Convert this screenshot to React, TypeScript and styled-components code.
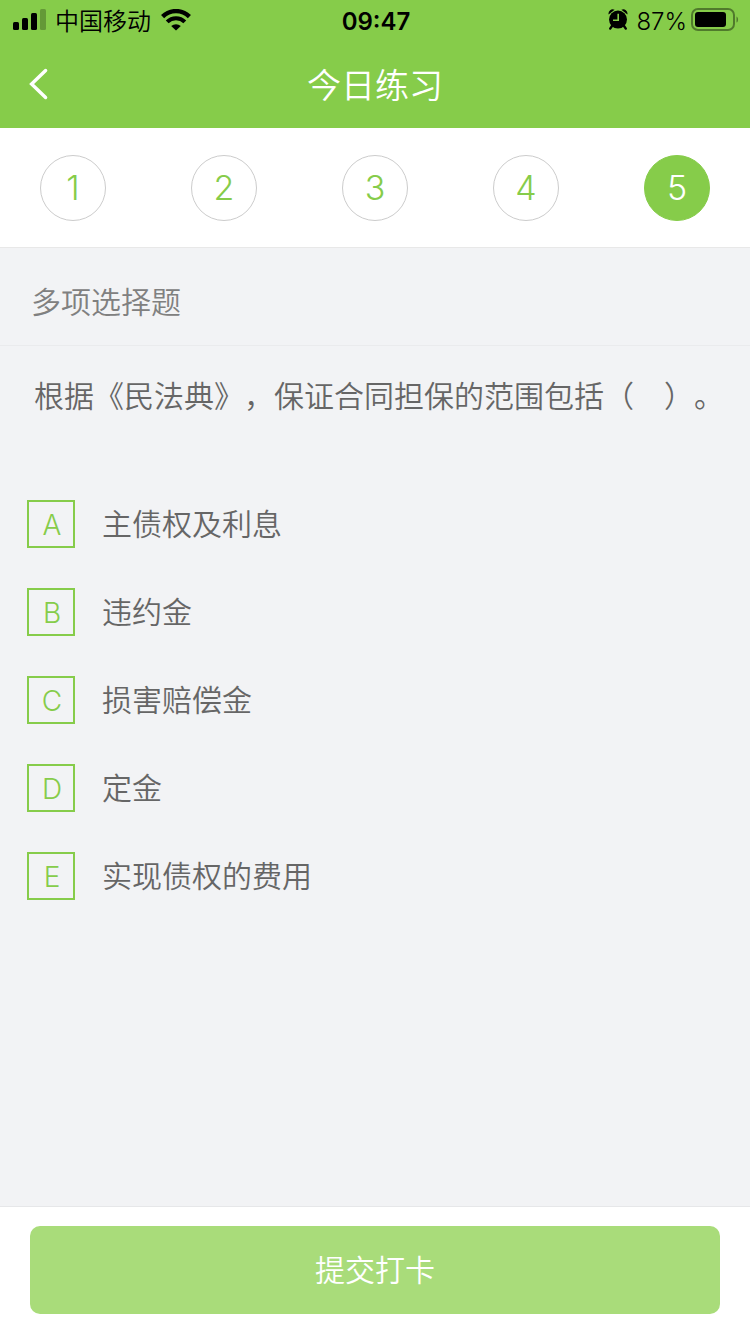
import React, { useState } from 'react';
import styled, { createGlobalStyle } from 'styled-components';

const GlobalStyle = createGlobalStyle`
  * { box-sizing: border-box; }
  body {
    margin: 0;
    background: #f2f3f5;
    color: #666;
    font-family: Inter, "Noto Sans CJK SC", sans-serif;
    font-size: 30px;
    font-weight: 350;
    line-height: 44px;
    text-spacing-trim: space-all;
  }
  button { font: inherit; padding: 0; border: 0; cursor: pointer; }
`;

const Page = styled.div`
  display: flex;
  flex-direction: column;
  min-height: 100vh;
`;

const Top = styled.header`
  background: #86cc4a;
`;

const StatusBar = styled.div`
  display: grid;
  grid-template-columns: 1fr auto 1fr;
  align-items: center;
  height: 40px;
  padding: 0 11px 0 13px;
  color: #000;
  font-size: 24px;
  line-height: 32px;
`;

const StatusGroup = styled.div<{ $end?: boolean; $gap: number }>`
  display: flex;
  align-items: center;
  justify-content: ${p => (p.$end ? 'flex-end' : 'flex-start')};
  gap: ${p => p.$gap}px;
`;

const StatusText = styled.span`
  padding-top: 3px;
`;

const Clock = styled.time`
  padding-top: 3px;
  font-weight: 600;
`;

const NavBar = styled.nav`
  display: grid;
  grid-template-columns: 78px 1fr 78px;
  align-items: center;
  height: 88px;
`;

const BackButton = styled.button`
  display: flex;
  align-items: center;
  height: 88px;
  padding-left: 28px;
  background: none;
`;

const Title = styled.h1`
  margin: 0;
  padding-top: 4px;
  color: #fff;
  font-size: 34px;
  font-weight: 350;
  text-align: center;
`;

const Steps = styled.div`
  display: flex;
  justify-content: space-between;
  padding: 27px 40px 26px;
  background: #fff;
  border-bottom: 1px solid #e8e8e8;
`;

const Step = styled.button<{ $active: boolean }>`
  width: 66px;
  height: 66px;
  && {
    border: 1px solid ${p => (p.$active ? '#86cc4a' : '#ccc')};
  }
  border-radius: 50%;
  background: ${p => (p.$active ? '#86cc4a' : '#fff')};
  color: ${p => (p.$active ? '#fff' : '#86cc4a')};
  font-size: 34px;
  font-weight: 350;
`;

const Kind = styled.h2`
  margin: 0;
  padding: 32px 31px 21px;
  border-bottom: 1px solid #eaebed;
  color: #808080;
  font-size: 30px;
  font-weight: 350;
`;

const Content = styled.main`
  flex: 1;
`;

const Question = styled.fieldset`
  min-width: 0;
  margin: 0;
  padding: 0;
  border: 0;
`;

const Prompt = styled.legend`
  padding: 28px 20px 82px 34px;
`;

const Options = styled.div`
  display: flex;
  flex-direction: column;
  gap: 40px;
  padding: 0 27px 40px;
`;

const Option = styled.label`
  display: flex;
  align-items: center;
  gap: 27px;
  height: 48px;
  cursor: pointer;
`;

const Mark = styled.span`
  display: grid;
  place-items: center;
  width: 48px;
  height: 48px;
  > * { grid-area: 1 / 1; }
`;

const Box = styled.input`
  appearance: none;
  width: 48px;
  height: 48px;
  margin: 0;
  border: 2px solid #86cc4a;
  &:checked { background: #86cc4a; }
  &:checked + span { color: #fff; }
`;

const Letter = styled.span`
  padding: 2px 0 0 2px;
  color: #86cc4a;
  font-size: 28px;
  z-index: 1;
`;

const Footer = styled.footer`
  padding: 19px 30px 20px;
  background: #fff;
  border-top: 1px solid #e6e7e9;
`;

const Submit = styled.button`
  display: block;
  width: 100%;
  height: 88px;
  border-radius: 10px;
  background: #a9dc7a;
  color: #fff;
`;

const SignalIcon = () => (
  <svg width="33" height="22" viewBox="0 0 33 22" aria-hidden="true">
    <rect x="0" y="13" width="6" height="8" rx="1.5" />
    <rect x="9" y="9" width="6" height="12" rx="1.5" />
    <rect x="18" y="4" width="6" height="17" rx="1.5" />
    <rect x="27" y="0" width="6" height="21" rx="1.5" opacity="0.25" />
  </svg>
);

const WifiIcon = () => (
  <svg width="32" height="22" viewBox="-1 0 32 22" aria-hidden="true">
    <path d="M1.6 7.6A19 19 0 0 1 28.4 7.6" fill="none" stroke="#000" strokeWidth="4.4" />
    <path d="M6.2 12.8A12.4 12.4 0 0 1 23.8 12.8" fill="none" stroke="#000" strokeWidth="4" />
    <path d="M15 21.6L10.2 17A7.2 7.2 0 0 1 19.8 17Z" />
  </svg>
);

const AlarmIcon = () => (
  <svg width="24" height="22" viewBox="0 0 24 22" aria-hidden="true">
    <path d="M4 17L2.2 19.6M16 17L17.8 19.6" stroke="#000" strokeWidth="2.4" strokeLinecap="round" />
    <path d="M.6 5.4A4.2 4.2 0 0 1 6.6 .8ZM19.4 5.4A4.2 4.2 0 0 0 13.4 .8Z" />
    <circle cx="10" cy="10.6" r="9" />
    <path d="M10.2 4.8V11.2H5" fill="none" stroke="#86cc4a" strokeWidth="1.6" />
  </svg>
);

const BatteryIcon = () => (
  <svg width="48" height="24" viewBox="0 0 48 24" aria-hidden="true">
    <rect x="1" y="1" width="42" height="21" rx="6" fill="none" stroke="#000" strokeWidth="2" opacity="0.4" />
    <rect x="4" y="4" width="31" height="15" rx="3" />
    <path d="M45.5 8.4C47.6 9.2 47.6 13.8 45.5 14.6Z" opacity="0.4" />
  </svg>
);

const BackIcon = () => (
  <svg width="22" height="34" viewBox="0 0 22 34" aria-hidden="true">
    <path d="M17.6 3.5L3.6 17L17.6 30.5" fill="none" stroke="#fff" strokeWidth="3.4" strokeLinecap="round" strokeLinejoin="miter" />
  </svg>
);

const steps = [1, 2, 3, 4, 5];

const options = [
  ['A', '主债权及利息'],
  ['B', '违约金'],
  ['C', '损害赔偿金'],
  ['D', '定金'],
  ['E', '实现债权的费用'],
];

export default function App() {
  const [current, setCurrent] = useState(5);
  return (
    <Page>
      <GlobalStyle />
      <Top>
        <StatusBar>
          <StatusGroup $gap={9}>
            <SignalIcon />
            <StatusText>中国移动</StatusText>
            <WifiIcon />
          </StatusGroup>
          <Clock>09:47</Clock>
          <StatusGroup $end $gap={4}>
            <AlarmIcon />
            <StatusText>87%</StatusText>
            <BatteryIcon />
          </StatusGroup>
        </StatusBar>
        <NavBar>
          <BackButton type="button" aria-label="返回"><BackIcon /></BackButton>
          <Title>今日练习</Title>
        </NavBar>
      </Top>
      <Steps>
        {steps.map(n => (
          <Step key={n} type="button" $active={n === current} onClick={() => setCurrent(n)}>{n}</Step>
        ))}
      </Steps>
      <Content>
        <Kind>多项选择题</Kind>
        <Question>
          <Prompt>根据《民法典》，保证合同担保的范围包括（{'\u3000'}）。</Prompt>
          <Options>
            {options.map(([letter, text]) => (
              <Option key={letter}>
                <Mark>
                  <Box type="checkbox" name="answer" value={letter} />
                  <Letter>{letter}</Letter>
                </Mark>
                <span>{text}</span>
              </Option>
            ))}
          </Options>
        </Question>
      </Content>
      <Footer>
        <Submit type="button">提交打卡</Submit>
      </Footer>
    </Page>
  );
}
